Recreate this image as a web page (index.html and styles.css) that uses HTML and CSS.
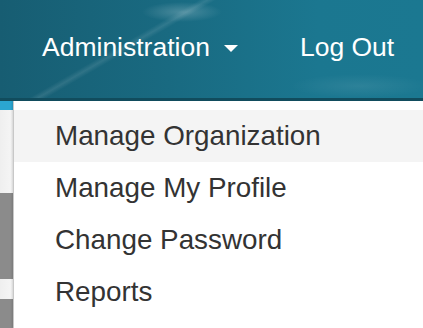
FILE: index.html
```html
<!DOCTYPE html>
<html lang="en">
<head>
    <meta charset="UTF-8">
    <meta name="viewport" content="width=device-width, initial-scale=1.0">
    <title>Administration</title>
    <link rel="stylesheet" href="styles.css">
</head>
<body>
    <!-- top bar -->
    <header class="topbar">
        <nav class="topnav">
            <a href="#" class="topnav-link">Administration <span class="caret"></span></a>
            <a href="#" class="topnav-link logout">Log Out</a>
        </nav>
    </header>

    <div class="content">
        <!-- page behind the menu -->
        <div class="side-strip">
            <div class="strip-tab"></div>
            <div class="strip-light"></div>
            <div class="strip-grey"></div>
            <div class="strip-light short"></div>
            <div class="strip-grey last"></div>
        </div>

        <!-- open dropdown -->
        <ul class="dropdown">
            <li><a href="#" class="dropdown-item active">Manage Organization</a></li>
            <li><a href="#" class="dropdown-item">Manage My Profile</a></li>
            <li><a href="#" class="dropdown-item">Change Password</a></li>
            <li><a href="#" class="dropdown-item">Reports</a></li>
        </ul>
    </div>
</body>
</html>
```

FILE: styles.css
```css
html, body {
    height: 100%;
}
body {
    margin: 0;
    font-family: 'Liberation Sans', Arial, sans-serif;
    background: #fff;
    overflow: hidden;
    display: flex;
    flex-direction: column;
}
.topbar {
    flex-shrink: 0;
    height: 98px;
    border-bottom: 3px solid #114c5d;
    background:
        radial-gradient(ellipse 40px 10px at 182px 12px, rgba(255, 255, 255, 0.22), transparent),
        radial-gradient(ellipse 70px 12px at 360px 86px, rgba(255, 255, 255, 0.08), transparent),
        linear-gradient(150deg, transparent 33.5%, rgba(255, 255, 255, 0.10) 35%, transparent 36.5%),
        linear-gradient(90deg, #175d72 0%, #196a81 40%, #1b7790 75%, #1b7891 100%);
    display: flex;
    align-items: center;
}
.topnav {
    display: flex;
    align-items: center;
    padding: 0 0 4px 42px;
}
.topnav-link {
    color: #fff;
    text-decoration: none;
    font-size: 26.5px;
    display: flex;
    align-items: center;
}
.caret {
    width: 0;
    height: 0;
    margin-left: 14px;
    margin-top: 3px;
    border-left: 7px solid transparent;
    border-right: 7px solid transparent;
    border-top: 7px solid #fff;
}
.logout {
    margin-left: 62px;
}
.content {
    flex: 1;
    display: flex;
    overflow: hidden;
}
.side-strip {
    width: 13px;
    display: flex;
    flex-direction: column;
}
.strip-tab {
    height: 9px;
    background: #2ba6d1;
}
.strip-light {
    height: 83px;
    background: linear-gradient(90deg, #efefef, #f6f6f6);
}
.strip-light.short {
    height: 20px;
}
.strip-grey {
    height: 86px;
    background: #8b8b8b;
}
.strip-grey.last {
    flex: 1;
}
.dropdown {
    flex: 1;
    list-style: none;
    margin: 0;
    padding: 9px 0 0;
    background: #fff;
    border-left: 1px solid #c8c8c8;
    box-shadow: -1px 0 2px rgba(0, 0, 0, 0.15);
}
.dropdown-item {
    display: block;
    height: 52px;
    line-height: 52px;
    padding-left: 41px;
    font-size: 27.8px;
    color: #333;
    text-decoration: none;
}
.dropdown-item.active {
    background: #f4f4f4;
}
```
